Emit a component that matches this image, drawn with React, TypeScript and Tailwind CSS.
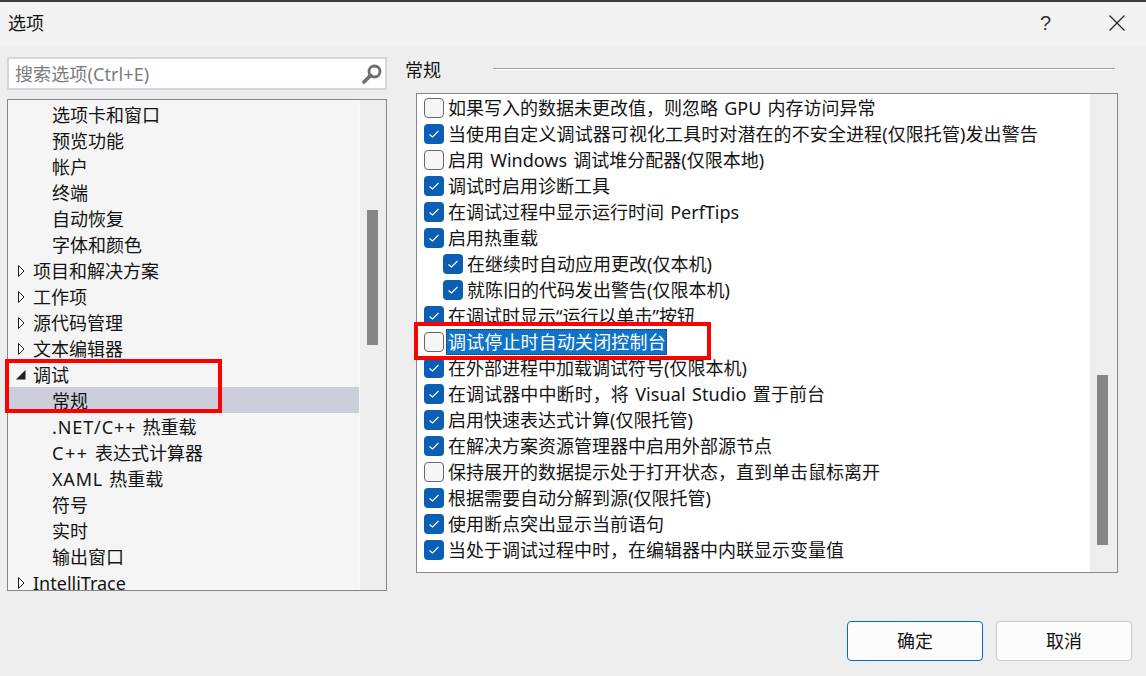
import React from "react";

const font = "font-['Noto_Sans','Noto_Sans_CJK_SC',sans-serif]";

type TreeRow = { t: React.ReactNode; k: string; level: 0 | 1; arrow?: "closed" | "open"; selected?: boolean };

const Wide = ({ children, cls }: { children: React.ReactNode; cls: string }) => <span className={cls}>{children}</span>;

const treeRows: TreeRow[] = [
  { k: "a", t: "选项卡和窗口", level: 1 },
  { k: "b", t: "预览功能", level: 1 },
  { k: "c", t: "帐户", level: 1 },
  { k: "d", t: "终端", level: 1 },
  { k: "e", t: "自动恢复", level: 1 },
  { k: "f", t: "字体和颜色", level: 1 },
  { k: "g", t: "项目和解决方案", level: 0, arrow: "closed" },
  { k: "h", t: "工作项", level: 0, arrow: "closed" },
  { k: "i", t: "源代码管理", level: 0, arrow: "closed" },
  { k: "j", t: "文本编辑器", level: 0, arrow: "closed" },
  { k: "l", t: "调试", level: 0, arrow: "open" },
  { k: "m", t: "常规", level: 1, selected: true },
  { k: "n", t: <><Wide cls="tracking-[0.9px]">.NET/C++</Wide> 热重载</>, level: 1 },
  { k: "o", t: <><Wide cls="tracking-[1.6px]">C++</Wide> 表达式计算器</>, level: 1 },
  { k: "p", t: <><Wide cls="tracking-[0.8px]">XAML</Wide> 热重载</>, level: 1 },
  { k: "q", t: "符号", level: 1 },
  { k: "r", t: "实时", level: 1 },
  { k: "s", t: "输出窗口", level: 1 },
  { k: "u", t: "IntelliTrace", level: 0, arrow: "closed" },
];

type Opt = { t: string; on: boolean; sub?: boolean; focus?: boolean; track?: boolean };

const opts: Opt[] = [
  { t: "如果写入的数据未更改值，则忽略 GPU 内存访问异常", on: false },
  { t: "当使用自定义调试器可视化工具时对潜在的不安全进程(仅限托管)发出警告", on: true, track: true },
  { t: "启用 Windows 调试堆分配器(仅限本地)", on: false },
  { t: "调试时启用诊断工具", on: true },
  { t: "在调试过程中显示运行时间 PerfTips", on: true },
  { t: "启用热重载", on: true },
  { t: "在继续时自动应用更改(仅本机)", on: true, sub: true },
  { t: "就陈旧的代码发出警告(仅限本机)", on: true, sub: true },
  { t: "在调试时显示“运行以单击”按钮", on: true },
  { t: "调试停止时自动关闭控制台", on: false, focus: true },
  { t: "在外部进程中加载调试符号(仅限本机)", on: true },
  { t: "在调试器中中断时，将 Visual Studio 置于前台", on: true, track: true },
  { t: "启用快速表达式计算(仅限托管)", on: true },
  { t: "在解决方案资源管理器中启用外部源节点", on: true },
  { t: "保持展开的数据提示处于打开状态，直到单击鼠标离开", on: false },
  { t: "根据需要自动分解到源(仅限托管)", on: true },
  { t: "使用断点突出显示当前语句", on: true },
  { t: "当处于调试过程中时，在编辑器中内联显示变量值", on: true },
];

function Arrow({ kind }: { kind?: "closed" | "open" }) {
  if (!kind) return <span className="w-[25px] shrink-0" />;
  return (
    <span className="w-[25px] shrink-0 flex justify-center items-center">
      {kind === "closed" ? (
        <svg width="10" height="14" viewBox="0 0 10 14">
          <path d="M2.5 1.5 L8 7 L2.5 12.5 Z" fill="#fff" stroke="#1e1e1e" strokeWidth="1" />
        </svg>
      ) : (
        <svg width="12" height="12" viewBox="0 0 12 12">
          <path d="M1 10.5 L10.5 10.5 L10.5 1 Z" fill="#1e1e1e" />
        </svg>
      )}
    </span>
  );
}

function Check({ on }: { on: boolean }) {
  return on ? (
    <span className="w-5 h-5 shrink-0 rounded-[4px] bg-[#0a5fb4] flex items-center justify-center">
      <svg width="12" height="10" viewBox="0 0 12 10">
        <path d="M1.5 5.5 L4.5 8 L10.5 2" fill="none" stroke="#fff" strokeWidth="1.1" />
      </svg>
    </span>
  ) : (
    <span className="w-5 h-5 shrink-0 rounded-[4px] border border-[#6b6570] bg-[#f6f6f6]" />
  );
}

export default function App() {
  return (
    <div className={`${font} relative w-[1146px] h-[676px] overflow-hidden bg-[#eeeeee] text-[#141414] flex flex-col`}>
      <div className="h-[2px] shrink-0 bg-[#3c3c3c]" />
      <div className="h-[43px] shrink-0 bg-[#f3f3f3] flex items-center pl-2 pr-[21px]">
        <span className="text-[18px] leading-none flex-1 -mt-[2px]">选项</span>
        <span className="text-[20px] leading-none text-[#333] mr-[58px] -mt-[2px] font-['Liberation_Sans',sans-serif]">?</span>
        <svg width="16" height="16" viewBox="0 0 16 16" className="-mt-[2px]">
          <path d="M0.5 0.5 L15.5 15.5 M15.5 0.5 L0.5 15.5" stroke="#222" strokeWidth="1.2" fill="none" />
        </svg>
      </div>

      <div className="flex-1 flex min-h-0 pl-[7px] pr-[28px] pt-[12px]">
        <div className="w-[380px] shrink-0 flex flex-col">
          <div className="h-[33px] shrink-0 border-2 border-[#d5d5e2] bg-white flex items-center pl-[6px] pr-[2px]">
            <span className="flex-1 text-[18px] text-[#7c7c7c] leading-none tracking-[0.1px]">搜索选项(Ctrl+E)</span>
            <svg width="22" height="22" viewBox="0 0 22 22">
              <circle cx="13.5" cy="8.5" r="5.5" fill="none" stroke="#6e6e6e" strokeWidth="2.8" />
              <path d="M9.5 12.5 L3 19" stroke="#6e6e6e" strokeWidth="3.8" strokeLinecap="round" />
            </svg>
          </div>
          <div className="mt-[9px] h-[492px] shrink-0 border border-[#85858f] bg-[#f5f5f5] flex overflow-hidden">
            <div className="flex-1 min-w-0 flex flex-col pt-[1px] overflow-hidden">
              {treeRows.map((r) => (
                <div
                  key={r.k}
                  className={`h-[26px] shrink-0 pt-[2px] flex items-center text-[18px] leading-none whitespace-nowrap [word-spacing:1.5px] ${r.selected ? "bg-[#cccedb]" : ""}`}
                >
                  <Arrow kind={r.arrow} />
                  <span className={r.level === 1 ? "pl-[19px]" : ""}>{r.t}</span>
                </div>
              ))}
            </div>
            <div className="w-[27px] shrink-0 bg-[#eeeeee] border-l border-[#f8f8f8] flex flex-col pl-[7px] pt-[110px]">
              <div className="w-[11px] h-[135px] bg-[#868686]" />
            </div>
          </div>
        </div>

        <div className="flex-1 min-w-0 flex flex-col pl-[29px]">
          <div className="h-[36px] shrink-0 flex items-start">
            <span className="text-[18px] leading-none -ml-[11px] mt-[4px]">常规</span>
            <div className="flex-1 h-[2px] mt-[11px] ml-[52px] mr-[3px] bg-[#a0a0a0] border-b border-white" />
          </div>
          <div className="h-[480px] shrink-0 border border-[#85858f] bg-white flex overflow-hidden">
            <div className="flex-1 min-w-0 flex flex-col pt-[1px] pl-[7px]">
              {opts.map((o) => (
                <div key={o.t} className={`h-[26px] shrink-0 flex items-center gap-[4px] text-[18px] leading-none whitespace-nowrap [word-spacing:1.5px] ${o.sub ? "pl-[19px]" : ""}`}>
                  <Check on={o.on} />
                  {o.focus ? (
                    <span className="bg-[#0f74c9] text-white h-[26px] flex items-center -ml-[2px] pl-[2px] pr-[1px] tracking-[0.15px] outline-1 outline-dotted -outline-offset-1 outline-[#333]">{o.t}</span>
                  ) : (
                    <span className={o.track ? "tracking-[0.09px]" : ""}>{o.t}</span>
                  )}
                </div>
              ))}
            </div>
            <div className="w-[27px] shrink-0 bg-[#eeeeee] flex flex-col pl-[7px] pt-[281px]">
              <div className="w-[11px] h-[170px] bg-[#868686]" />
            </div>
          </div>
        </div>
      </div>

      <div className="h-[43px] shrink-0 mb-[12px] flex justify-end gap-[13px] pr-[14px]">
        <button className="w-[136px] h-[40px] rounded-[4px] border border-[#0a6cc0] bg-[#fcfcfc] text-[18px] leading-none">确定</button>
        <button className="w-[136px] h-[40px] rounded-[4px] border border-[#c9c9c9] bg-[#fcfcfc] text-[18px] leading-none">取消</button>
      </div>

      <div className="absolute left-[5px] top-[359px] w-[217px] h-[54px] border-[4px] border-[#fd0000]" />
      <div className="absolute left-[414px] top-[322px] w-[297px] h-[38px] border-[4px] border-[#fd0000]" />
    </div>
  );
}
